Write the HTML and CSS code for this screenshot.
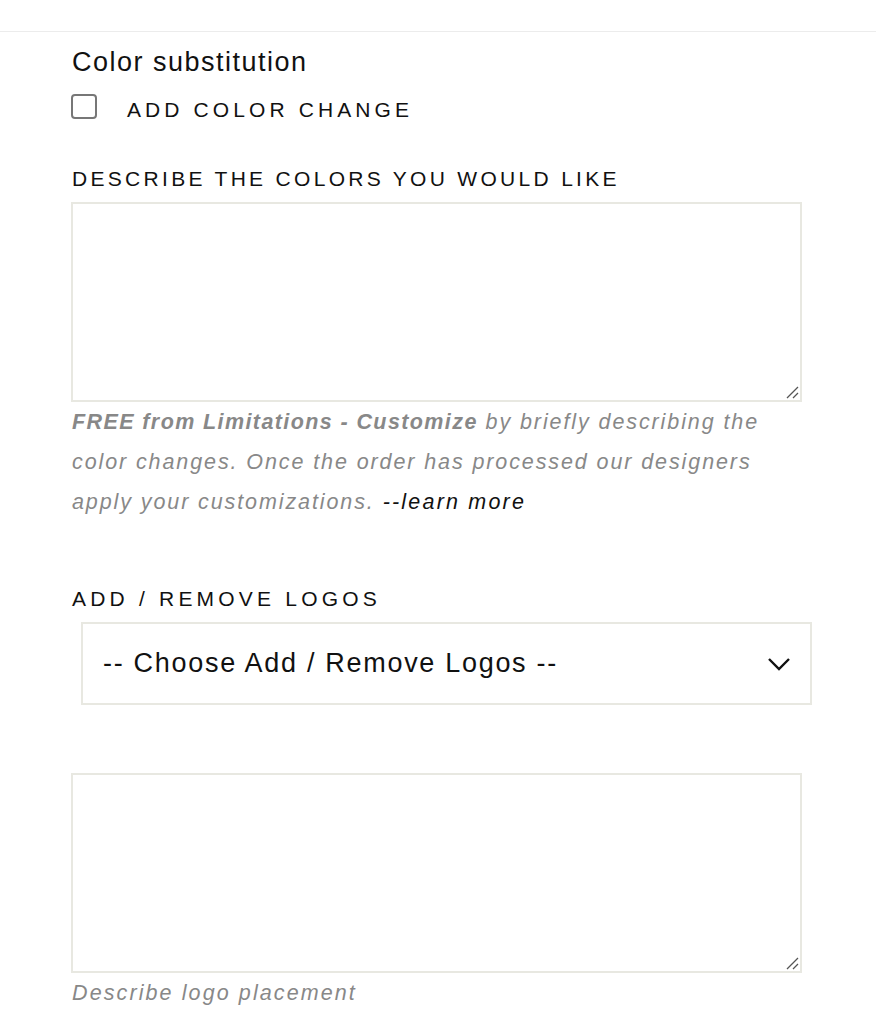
FILE: index.html
```html
<!DOCTYPE html>
<html>
<head>
<meta charset="utf-8">
<link rel="stylesheet" href="styles.css">
</head>
<body>
<div class="topbar"></div>
<main class="form">
  <h3 class="group-title">Color substitution</h3>
  <label class="check-row">
    <span class="checkbox"></span>
    <span class="check-label">ADD COLOR CHANGE</span>
  </label>
  <div class="field colors">
    <div class="field-label">DESCRIBE THE COLORS YOU WOULD LIKE</div>
    <div class="textarea">
      <svg class="grip" width="14" height="14" viewBox="0 0 14 14"><path d="M2 13 L13 2 M8 13 L13 8" stroke="#555" stroke-width="1.3" fill="none"/></svg>
    </div>
    <p class="help"><b>FREE from Limitations - Customize</b> by briefly describing the color changes. Once the order has processed our designers apply your customizations. <a class="learn">--learn more</a></p>
  </div>
  <div class="field logos">
    <div class="field-label wide">ADD / REMOVE LOGOS</div>
    <div class="select">
      <span class="select-text">-- Choose Add / Remove Logos --</span>
      <svg class="chevron" width="24" height="16" viewBox="0 0 24 16"><path d="M2 3 L12 13 L22 3" stroke="#111" stroke-width="2.4" fill="none"/></svg>
    </div>
  </div>
  <div class="field placement">
    <div class="textarea">
      <svg class="grip" width="14" height="14" viewBox="0 0 14 14"><path d="M2 13 L13 2 M8 13 L13 8" stroke="#555" stroke-width="1.3" fill="none"/></svg>
    </div>
    <p class="help small">Describe logo placement</p>
  </div>
</main>
</body>
</html>
```
FILE: styles.css
```css
* { box-sizing: border-box; }
body {
  margin: 0;
  background: #fff;
  font-family: "Liberation Sans", Arial, sans-serif;
  color: #111;
}
.topbar {
  height: 32px;
  border-bottom: 1px solid #ececec;
}
.form {
  padding-left: 71px;
  width: 812px;
}
.group-title {
  margin: 13px 0 0 1px;
  font-weight: 400;
  font-size: 27px;
  line-height: 34px;
  letter-spacing: 1.5px;
  color: #111;
}
.check-row {
  display: flex;
  align-items: flex-start;
  margin-top: 15px;
  height: 30px;
}
.checkbox {
  width: 26px;
  height: 25px;
  border: 2px solid #777;
  border-radius: 4px;
}
.check-label {
  margin-left: 30px;
  font-size: 21px;
  letter-spacing: 4.1px;
  line-height: 32px;
}
.colors { margin-top: 43px; }
.field-label {
  margin-left: 1px;
  font-size: 21px;
  letter-spacing: 3.3px;
  line-height: 24px;
}
.field-label.wide { letter-spacing: 4.2px; }
.textarea {
  position: relative;
  width: 731px;
  height: 200px;
  margin-top: 11px;
  border: 2px solid #e8e8e1;
  background: #fff;
}
.grip {
  position: absolute;
  right: 1px;
  bottom: 1px;
}
.help {
  margin: 0 0 0 1px;
  font-style: italic;
  color: #888;
  font-size: 21.5px;
  line-height: 40px;
  letter-spacing: 1.9px;
  width: 730px;
}
.help b { font-weight: 700; letter-spacing: 1.4px; }
.learn { color: #111; letter-spacing: 2.2px; }
.logos { margin-top: 65px; }
.select {
  display: flex;
  align-items: center;
  justify-content: space-between;
  width: 731px;
  height: 83px;
  margin: 11px 0 0 10px;
  border: 2px solid #e8e8e1;
  padding: 0 19px 0 20px;
}
.select-text {
  font-size: 27px;
  letter-spacing: 1.7px;
}
.placement { margin-top: 68px; }
.placement .textarea { margin-top: 0; }
.help.small { margin-top: 1px; line-height: 38px; letter-spacing: 2.1px; }
```
